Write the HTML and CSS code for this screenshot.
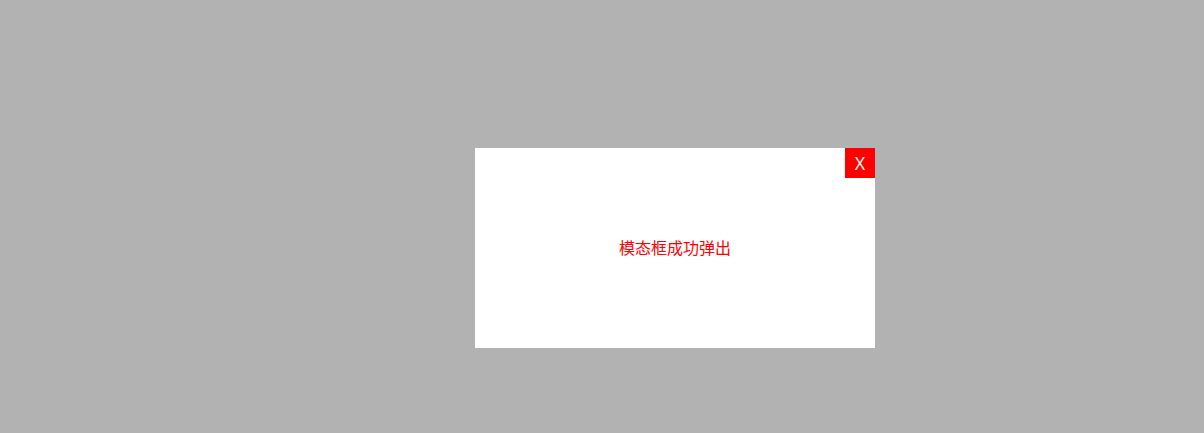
FILE: index.html
```html
<!DOCTYPE html>
<html lang="zh">
<head>
<meta charset="utf-8">
<link rel="stylesheet" href="styles.css">
</head>
<body>
<div class="overlay">
  <div class="modal">
    <div class="modal-head"><span class="close">X</span></div>
    <div class="modal-body">模态框成功弹出</div>
  </div>
</div>
</body>
</html>
```
FILE: styles.css
```css
html, body {
  margin: 0;
  padding: 0;
  width: 1204px;
  height: 433px;
  overflow: hidden;
}
body {
  font-family: "Noto Sans CJK SC", "Noto Sans", sans-serif;
}
.overlay {
  width: 1204px;
  height: 433px;
  background: #b2b2b2;
  box-sizing: border-box;
  padding: 148px 0 0 475px;
}
.modal {
  width: 400px;
  height: 200px;
  background: #fff;
  display: flex;
  flex-direction: column;
}
.modal-head {
  display: flex;
  justify-content: flex-end;
}
.close {
  width: 30px;
  height: 30px;
  background: #ff0000;
  color: #fff;
  font-size: 18px;
  line-height: 30px;
  text-align: center;
  font-family: "Open Sans", "Noto Sans", sans-serif;
}
.modal-body {
  flex: 1;
  display: flex;
  align-items: center;
  justify-content: center;
  color: #ff0000;
  font-size: 16px;
  margin-top: -30px;
  padding-bottom: 2px;
}
```
